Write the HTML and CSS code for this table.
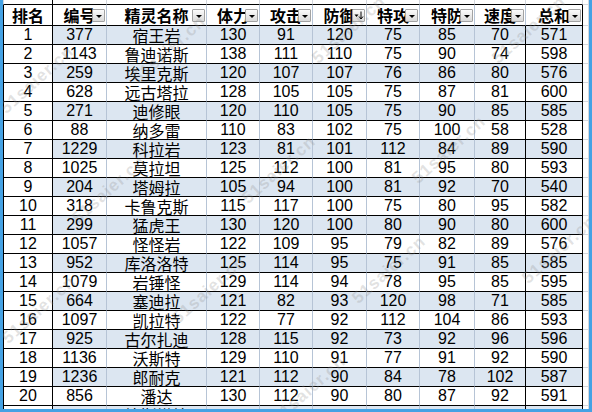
FILE: index.html
```html
<!DOCTYPE html>
<html>
<head>
<meta charset="utf-8">
<link rel="stylesheet" href="styles.css">
</head>
<body>
<div class="frame">
<div class="sheet">
<div class="grid">
<div class="r pre"><div></div><div></div><div></div><div></div><div></div><div></div><div></div><div></div><div></div><div></div><div></div></div>
<div class="r hd">
<div><span>排名</span></div>
<div><span>编号</span><i class="dd"></i></div>
<div><span>精灵名称</span><i class="dd"></i></div>
<div><span>体力</span><i class="dd"></i></div>
<div><span>攻击</span><i class="dd"></i></div>
<div><span>防御</span><i class="dd sort"><svg width="11" height="11" viewBox="0 0 11 11"><path d="M1.5 4.5h4l-2 2.5z" fill="#000"/><path d="M8 1.5v7" stroke="#000" stroke-width="1"/><path d="M6 6.5l2 2.5 2-2.5" stroke="#000" stroke-width="1" fill="none"/></svg></i></div>
<div><span>特攻</span><i class="dd"></i></div>
<div><span>特防</span><i class="dd"></i></div>
<div><span>速度</span><i class="dd"></i></div>
<div><span>总和</span><i class="dd"></i></div>
<div></div>
</div>
<div class="r odd"><div>1</div><div>377</div><div>宿王岩</div><div>130</div><div>91</div><div>120</div><div>75</div><div>85</div><div>70</div><div>571</div><div></div></div>
<div class="r"><div>2</div><div>1143</div><div>鲁迪诺斯</div><div>138</div><div>111</div><div>110</div><div>75</div><div>90</div><div>74</div><div>598</div><div></div></div>
<div class="r odd"><div>3</div><div>259</div><div>埃里克斯</div><div>120</div><div>107</div><div>107</div><div>76</div><div>86</div><div>80</div><div>576</div><div></div></div>
<div class="r"><div>4</div><div>628</div><div>远古塔拉</div><div>128</div><div>105</div><div>105</div><div>75</div><div>87</div><div>81</div><div>600</div><div></div></div>
<div class="r odd"><div>5</div><div>271</div><div>迪修眼</div><div>120</div><div>110</div><div>105</div><div>75</div><div>90</div><div>85</div><div>585</div><div></div></div>
<div class="r"><div>6</div><div>88</div><div>纳多雷</div><div>110</div><div>83</div><div>102</div><div>75</div><div>100</div><div>58</div><div>528</div><div></div></div>
<div class="r odd"><div>7</div><div>1229</div><div>科拉岩</div><div>123</div><div>81</div><div>101</div><div>112</div><div>84</div><div>89</div><div>590</div><div></div></div>
<div class="r"><div>8</div><div>1025</div><div>莫拉坦</div><div>125</div><div>112</div><div>100</div><div>81</div><div>95</div><div>80</div><div>593</div><div></div></div>
<div class="r odd"><div>9</div><div>204</div><div>塔姆拉</div><div>105</div><div>94</div><div>100</div><div>81</div><div>92</div><div>70</div><div>540</div><div></div></div>
<div class="r"><div>10</div><div>318</div><div>卡鲁克斯</div><div>115</div><div>117</div><div>100</div><div>75</div><div>80</div><div>95</div><div>582</div><div></div></div>
<div class="r odd"><div>11</div><div>299</div><div>猛虎王</div><div>130</div><div>120</div><div>100</div><div>80</div><div>90</div><div>80</div><div>600</div><div></div></div>
<div class="r"><div>12</div><div>1057</div><div>怪怪岩</div><div>122</div><div>109</div><div>95</div><div>79</div><div>82</div><div>89</div><div>576</div><div></div></div>
<div class="r odd"><div>13</div><div>952</div><div>库洛洛特</div><div>125</div><div>114</div><div>95</div><div>75</div><div>91</div><div>85</div><div>585</div><div></div></div>
<div class="r"><div>14</div><div>1079</div><div>岩锤怪</div><div>129</div><div>114</div><div>94</div><div>78</div><div>95</div><div>85</div><div>595</div><div></div></div>
<div class="r odd"><div>15</div><div>664</div><div>塞迪拉</div><div>121</div><div>82</div><div>93</div><div>120</div><div>98</div><div>71</div><div>585</div><div></div></div>
<div class="r"><div>16</div><div>1097</div><div>凯拉特</div><div>122</div><div>77</div><div>92</div><div>112</div><div>104</div><div>86</div><div>593</div><div></div></div>
<div class="r odd"><div>17</div><div>925</div><div>古尔扎迪</div><div>128</div><div>115</div><div>92</div><div>73</div><div>92</div><div>96</div><div>596</div><div></div></div>
<div class="r"><div>18</div><div>1136</div><div>沃斯特</div><div>129</div><div>110</div><div>91</div><div>77</div><div>91</div><div>92</div><div>590</div><div></div></div>
<div class="r odd"><div>19</div><div>1236</div><div>郎耐克</div><div>121</div><div>112</div><div>90</div><div>84</div><div>78</div><div>102</div><div>587</div><div></div></div>
<div class="r"><div>20</div><div>856</div><div>潘达</div><div>130</div><div>112</div><div>90</div><div>80</div><div>87</div><div>92</div><div>591</div><div></div></div>
<div class="r odd"><div></div><div></div><div>拉斯塔拉</div><div></div><div></div><div></div><div></div><div></div><div></div><div></div><div></div></div>
</div>
<div class="wm">
<span class="w1">51saier.cn</span>
<span class="w2">51saier.cn</span>
<span class="w3">51saier.cn</span>
<span class="w4">51saier.cn</span>
<span class="w5">51saier.cn</span>
<span class="w6">51saier.cn</span>
<span class="w7">51saier.cn</span>
<span class="w8">51saier.cn</span>
<span class="w9">51saier.cn</span>
<span class="w10">51saier.cn</span>
<span class="w11">51saier.cn</span>
<span class="w12">51saier.cn</span>
</div>
</div>
</div>
</body>
</html>
```
FILE: styles.css
```css
html, body { margin: 0; padding: 0; background: #fff; }
.frame {
  width: 592px; height: 412px; box-sizing: border-box;
  padding: 0 3px 3px 3px; background: #45a2e4; overflow: hidden;
}
.sheet { position: relative; width: 586px; height: 409px; background: #fff; overflow: hidden; }
.grid {
  display: grid;
  grid-template-columns: 50px 54px 100px 53px 53px 54px 53px 55px 51px 57px 6px;
  grid-template-rows: 5px 21px repeat(21, 19px);
  font-family: "Liberation Sans", "Noto Sans CJK SC", sans-serif;
  font-size: 16px; color: #000;
}
.r { display: contents; }
.r > div {
  box-sizing: border-box; position: relative;
  border-right: 1px solid #b6c4d6; border-bottom: 1px solid #000;
  display: flex; align-items: center; justify-content: center;
  white-space: nowrap; line-height: 18px;
}
.r > div:nth-child(1) { border-left: 1px solid #000; border-right-color: #000; }
.r > div:nth-child(9), .r > div:nth-child(10) { border-right-color: #000; }
.r > div:nth-child(3) { font-family: "Noto Sans CJK SC", sans-serif; font-size: 16px; }
.r > div:nth-child(11) { border-right-color: #d4d8de; border-bottom-color: #d4d8de; background: #fff; }
.odd > div:nth-child(n+2):nth-child(-n+10) { background: #dce6f1; }
.pre > div { border-right-color: #d4d8de; border-left-color: #d4d8de !important; }
.pre > div:nth-child(9), .pre > div:nth-child(10) { border-right-color: #d4d8de; }
.hd > div { font-family: "Noto Sans CJK SC", sans-serif; font-weight: 700; font-size: 16px; line-height: 20px; }
.hd > div:nth-child(n+2):nth-child(-n+9) { border-right-color: #b6c4d6; }
.dd {
  position: absolute; right: 1px; top: 4px; width: 13px; height: 13px; box-sizing: border-box;
  border: 1px solid #a3a3a3; border-radius: 1px;
  background: linear-gradient(#fbfbfb, #dadada);
  display: flex; align-items: center; justify-content: center;
}
.dd::after {
  content: ""; width: 0; height: 0;
  border-left: 3px solid transparent; border-right: 3px solid transparent; border-top: 3px solid #000;
  margin-top: 1px;
}
.dd.sort::after { display: none; }
.dd.sort svg { display: block; }
.wm { position: absolute; inset: 0; pointer-events: none; }
.wm span {
  position: absolute; font-family: "Liberation Sans", sans-serif; font-weight: 700; font-size: 17px;
  color: rgba(140, 140, 140, 0.25); transform: rotate(-42deg); transform-origin: center;
  letter-spacing: 1px;
}
.w1 { left: -12px; top: 70px; }
.w2 { left: 120px; top: 40px; }
.w3 { left: 300px; top: 20px; }
.w4 { left: 480px; top: 20px; }
.w5 { left: 60px; top: 180px; }
.w6 { left: 230px; top: 160px; }
.w7 { left: 400px; top: 140px; }
.w8 { left: -10px; top: 300px; }
.w9 { left: 160px; top: 280px; }
.w10 { left: 340px; top: 260px; }
.w11 { left: 510px; top: 240px; }
.w12 { left: 260px; top: 380px; }
```
